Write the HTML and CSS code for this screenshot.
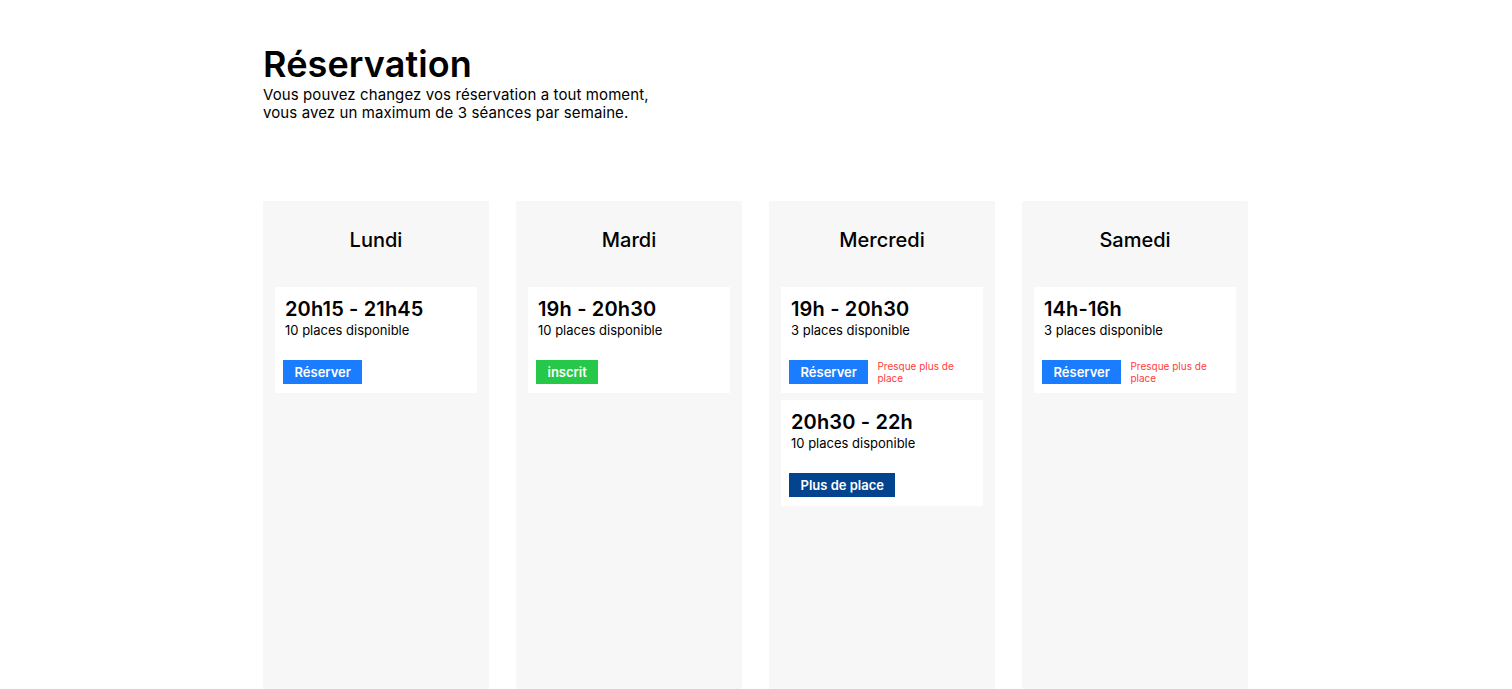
FILE: index.html
```html
<!DOCTYPE html>
<html lang="fr">
<head>
<meta charset="utf-8">
<title>Réservation</title>
<link rel="stylesheet" href="styles.css">
</head>
<body>
<main class="page">
  <header class="intro">
    <h1 class="title">Réservation</h1>
    <p class="subtitle">Vous pouvez changez vos réservation a tout moment,<br>vous avez un maximum de 3 séances par semaine.</p>
  </header>
  <section class="week">
    <div class="day">
      <h2 class="day-name">Lundi</h2>
      <div class="slots">
        <div class="slot">
          <div class="slot-time">20h15 - 21h45</div>
          <div class="slot-places">10 places disponible</div>
          <div class="slot-actions"><button class="btn btn-book">Réserver</button></div>
        </div>
      </div>
    </div>
    <div class="day">
      <h2 class="day-name">Mardi</h2>
      <div class="slots">
        <div class="slot">
          <div class="slot-time">19h - 20h30</div>
          <div class="slot-places">10 places disponible</div>
          <div class="slot-actions"><button class="btn btn-done">inscrit</button></div>
        </div>
      </div>
    </div>
    <div class="day">
      <h2 class="day-name">Mercredi</h2>
      <div class="slots">
        <div class="slot">
          <div class="slot-time">19h - 20h30</div>
          <div class="slot-places">3 places disponible</div>
          <div class="slot-actions"><button class="btn btn-book">Réserver</button><span class="warn">Presque plus de place</span></div>
        </div>
        <div class="slot">
          <div class="slot-time">20h30 - 22h</div>
          <div class="slot-places">10 places disponible</div>
          <div class="slot-actions"><button class="btn btn-full">Plus de place</button></div>
        </div>
      </div>
    </div>
    <div class="day">
      <h2 class="day-name">Samedi</h2>
      <div class="slots">
        <div class="slot">
          <div class="slot-time">14h-16h</div>
          <div class="slot-places">3 places disponible</div>
          <div class="slot-actions"><button class="btn btn-book">Réserver</button><span class="warn">Presque plus de place</span></div>
        </div>
      </div>
    </div>
  </section>
</main>
</body>
</html>
```
FILE: styles.css
```css
* { box-sizing: border-box; }
html, body { margin: 0; padding: 0; background: #ffffff; }
body {
  font-family: Inter, "Noto Sans", "Liberation Sans", sans-serif;
  color: #000;
  height: 689px;
  overflow: hidden;
}
.page {
  padding: 42px 263px 0 263px;
}
.intro { margin: 0; }
.title {
  margin: 0;
  font-size: 36px;
  line-height: 44px;
  font-weight: 600;
  letter-spacing: 0.1px;
}
.subtitle {
  margin: 0;
  font-size: 15px;
  line-height: 18px;
  font-weight: 400;
  letter-spacing: 0.1px;
}
.week {
  margin-top: 79px;
  display: grid;
  grid-template-columns: repeat(4, 226px);
  column-gap: 27px;
}
.day {
  background: #f7f7f7;
  border-radius: 2px;
  height: 488px;
  padding: 27px 12px 0 12px;
}
.day-name {
  margin: 0;
  text-align: center;
  font-size: 20px;
  line-height: 24px;
  font-weight: 500;
}
.slots {
  margin-top: 35px;
  display: flex;
  flex-direction: column;
  gap: 7px;
}
.slot {
  background: #ffffff;
  padding: 9px 8px 8px 8px;
  height: 106px;
}
.slot-time {
  padding-left: 2px;
  font-size: 20px;
  line-height: 26px;
  font-weight: 600;
  letter-spacing: 0.15px;
}
.slot-places {
  padding-left: 2px;
  font-size: 13px;
  line-height: 16px;
  font-weight: 400;
}
.slot-actions {
  margin-top: 22px;
  display: flex;
  align-items: center;
  gap: 9px;
}
.btn {
  border: 0;
  border-radius: 0;
  height: 24px;
  padding: 0 11.5px;
  font-family: inherit;
  font-size: 13px;
  font-weight: 600;
  color: #fff;
  cursor: pointer;
  flex: none;
}
.btn-book { background: #1a7cff; }
.btn-done { background: #26c84a; }
.btn-full { background: #03448e; }
.warn {
  font-size: 10px;
  line-height: 12px;
  color: #ff3b3b;
  max-width: 90px;
}
```
